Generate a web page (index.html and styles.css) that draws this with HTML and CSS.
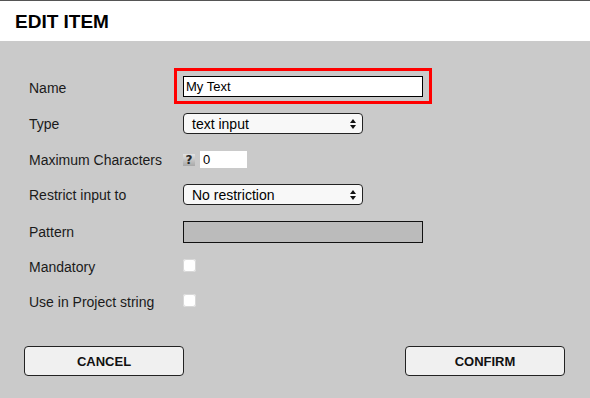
FILE: index.html
```html
<!DOCTYPE html>
<html>
<head>
<meta charset="utf-8">
<link rel="stylesheet" href="styles.css">
</head>
<body>
<div class="page">
  <header class="header"><h1 class="title">EDIT ITEM</h1></header>
  <main class="form">
    <div class="row row-name">
      <label class="label">Name</label>
      <div class="focus-ring"><input class="text-input" type="text" value="My Text"></div>
    </div>
    <div class="row row-type">
      <label class="label">Type</label>
      <div class="select"><span>text input</span>
        <svg class="arrows" width="6" height="10" viewBox="0 0 6 10"><path d="M3 0 L6 4 L0 4 Z M0 6 L6 6 L3 10 Z" fill="#111"/></svg>
      </div>
    </div>
    <div class="row row-max">
      <label class="label">Maximum Characters</label>
      <div class="max-group">
        <span class="help">?</span>
        <input class="num-input" type="text" value="0">
      </div>
    </div>
    <div class="row row-restrict">
      <label class="label">Restrict input to</label>
      <div class="select"><span>No restriction</span>
        <svg class="arrows" width="6" height="10" viewBox="0 0 6 10"><path d="M3 0 L6 4 L0 4 Z M0 6 L6 6 L3 10 Z" fill="#111"/></svg>
      </div>
    </div>
    <div class="row row-pattern">
      <label class="label">Pattern</label>
      <div class="pattern"></div>
    </div>
    <div class="row row-check1">
      <label class="label">Mandatory</label>
      <span class="checkbox"></span>
    </div>
    <div class="row row-check2">
      <label class="label">Use in Project string</label>
      <span class="checkbox"></span>
    </div>
  </main>
  <footer class="footer">
    <button class="btn">CANCEL</button>
    <button class="btn">CONFIRM</button>
  </footer>
</div>
</body>
</html>
```
FILE: styles.css
```css
html, body {
  margin: 0;
  padding: 0;
  background: #cacaca;
}
.page {
  width: 590px;
  height: 398px;
  background: #cacaca;
  font-family: "Liberation Sans", Arial, sans-serif;
  color: #111;
  overflow: hidden;
}
.header {
  background: #fff;
  border-top: 1px solid #555;
  height: 40px;
  display: flex;
  align-items: center;
  padding-left: 15px;
}
.title {
  margin: 0;
  font-size: 19px;
  font-weight: bold;
  color: #000;
  letter-spacing: 0;
  padding-top: 1px;
}
.form {
  padding: 27px 0 0 29px;
  display: flex;
  flex-direction: column;
}
.row {
  display: flex;
  align-items: center;
}
.label {
  width: 154px;
  font-size: 14px;
  color: #1a1a1a;
}
.row-name .label { padding-top: 3px; }
.row-type { margin-top: 9px; }
.row-max { margin-top: 17px; }
.row-restrict { margin-top: 16px; }
.row-pattern { margin-top: 16px; }
.row-check1 { margin-top: 12px; height: 20px; }
.row-check2 { margin-top: 15px; height: 20px; }
.row-check1 .label, .row-check2 .label { padding-top: 3px; }

.focus-ring {
  margin-left: -9px;
  border: 3px solid #f00;
  padding: 5px 6px 4px 6px;
  display: flex;
}
.text-input {
  box-sizing: border-box;
  width: 240px;
  height: 21px;
  border: 1px solid #000;
  background: #fff;
  margin: 0;
  padding: 0 2px;
  font-family: "Liberation Sans", Arial, sans-serif;
  font-size: 13px;
  color: #000;
  outline: none;
}
.select {
  box-sizing: border-box;
  width: 180px;
  height: 21px;
  border: 1px solid #222;
  border-radius: 4px;
  background: #f8f8f8;
  display: flex;
  align-items: center;
  justify-content: space-between;
  padding: 0 6px 0 8px;
  font-size: 14px;
  color: #000;
}
.arrows { display: block; }
.max-group {
  display: flex;
  align-items: center;
  gap: 5px;
}
.help {
  width: 12px;
  height: 12px;
  background: linear-gradient(#e2e2e2, #a8a8a8);
  color: #262626;
  font-family: "DejaVu Sans", sans-serif;
  font-size: 12px;
  font-weight: bold;
  line-height: 12px;
  text-align: center;
  display: block;
  margin-top: 1px;
}
.num-input {
  box-sizing: border-box;
  width: 47px;
  height: 17px;
  border: none;
  background: #fff;
  margin: 0;
  padding: 0 3px;
  font-family: "Liberation Sans", Arial, sans-serif;
  font-size: 13px;
  color: #000;
  outline: none;
}
.pattern {
  box-sizing: border-box;
  width: 240px;
  height: 22px;
  border: 1px solid #111;
  background: #bbbbbb;
}
.checkbox {
  width: 13px;
  height: 13px;
  background: #fff;
  border-radius: 3px;
  box-shadow: inset 0 0 0 1px #d8d8d8;
  display: block;
}
.footer {
  display: flex;
  justify-content: space-between;
  padding: 36px 25px 0 24px;
}
.btn {
  box-sizing: border-box;
  width: 160px;
  height: 30px;
  border: 1px solid #222;
  border-radius: 4px;
  background: #f0f0f0;
  font-family: "Liberation Sans", Arial, sans-serif;
  font-weight: bold;
  font-size: 13px;
  color: #111;
  padding: 0;
  margin: 0;
}
```
